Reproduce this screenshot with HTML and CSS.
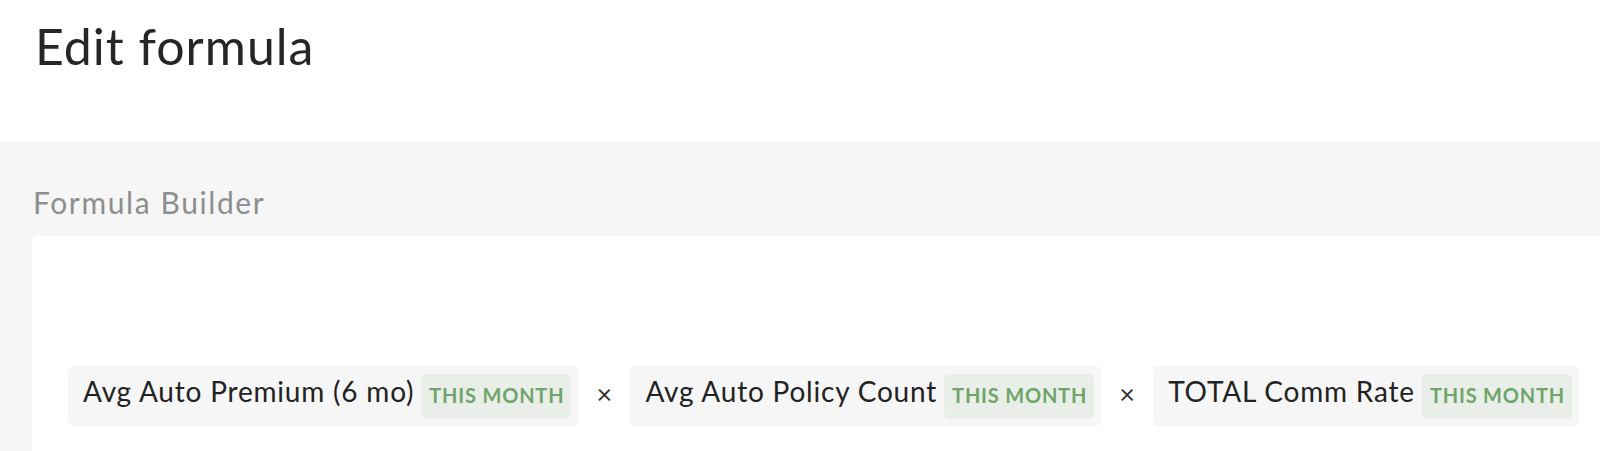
FILE: index.html
```html
<!DOCTYPE html>
<html>
<head>
<meta charset="utf-8">
<link rel="stylesheet" href="styles.css">
</head>
<body>
<header class="page-header">
  <h1 class="title">Edit formula</h1>
</header>
<section class="builder">
  <h2 class="builder-label">Formula Builder</h2>
  <div class="card">
    <div class="formula">
      <div class="chip"><span class="chip-name">Avg Auto Premium (6 mo)</span><span class="tag">THIS MONTH</span></div>
      <span class="op">×</span>
      <div class="chip"><span class="chip-name">Avg Auto Policy Count</span><span class="tag">THIS MONTH</span></div>
      <span class="op">×</span>
      <div class="chip"><span class="chip-name">TOTAL Comm Rate</span><span class="tag">THIS MONTH</span></div>
    </div>
  </div>
</section>
</body>
</html>
```
FILE: styles.css
```css
html, body {
  margin: 0;
  padding: 0;
  background: #ffffff;
  overflow: hidden;
  font-family: Lato, "Noto Sans", sans-serif;
}
.page-header {
  height: 142px;
  padding-left: 35px;
  box-sizing: border-box;
}
.title {
  margin: 0;
  padding-top: 16px;
  font-size: 50px;
  font-weight: 400;
  letter-spacing: 1px;
  color: #262626;
  line-height: 60px;
}
.builder {
  background: #f6f6f6;
  padding: 40px 0 0 32px;
  height: 309px;
  box-sizing: border-box;
}
.builder-label {
  margin: 0 0 0 1px;
  font-size: 30px;
  font-weight: 400;
  letter-spacing: 1.6px;
  color: #8e8e8e;
  line-height: 40px;
  height: 54px;
}
.card {
  background: #ffffff;
  border-radius: 6px 0 0 0;
  margin-right: -20px;
  height: 300px;
  padding: 130px 0 0 36px;
  box-sizing: border-box;
}
.formula {
  display: flex;
  align-items: center;
  gap: 20px;
}
.chip {
  display: flex;
  align-items: center;
  height: 60px;
  box-sizing: border-box;
  background: #f6f6f6;
  border-radius: 5px;
  padding: 0 7px 0 15px;
}
.chip-name {
  font-size: 28px;
  letter-spacing: 0.8px;
  color: #222222;
  margin-right: 7px;
  padding-bottom: 10px;
}
.tag {
  display: flex;
  align-items: center;
  height: 45px;
  box-sizing: border-box;
  padding: 0 7px 2px 8px;
  background: #e9efe8;
  border-radius: 5px;
  color: #6fa56a;
  font-size: 20px;
  letter-spacing: 0.8px;
  font-weight: 700;
}
.op {
  display: flex;
  justify-content: center;
  width: 12px;
  font-size: 27px;
  color: #333333;
  padding-bottom: 6px;
}
```
